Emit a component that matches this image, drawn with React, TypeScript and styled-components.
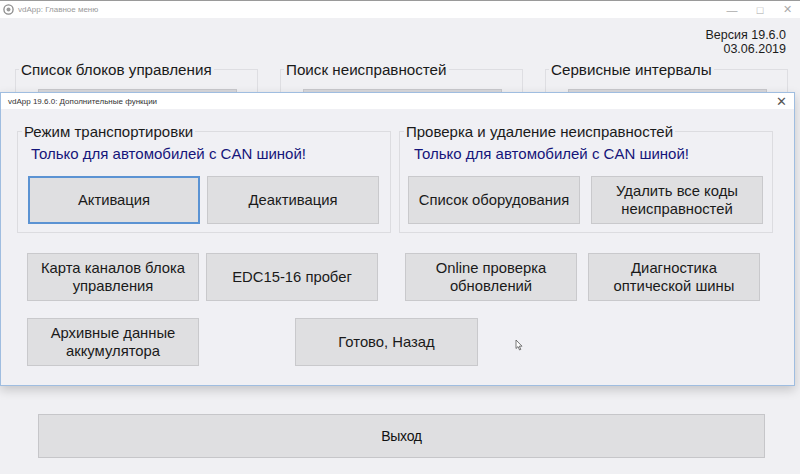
import React from "react";
import styled, { createGlobalStyle } from "styled-components";

const GlobalStyle = createGlobalStyle`
    html, body {
        margin: 0;
        padding: 0;
        width: 800px;
        height: 474px;
        overflow: hidden;
        background: #f0f0f3;
    }
    * {
        box-sizing: border-box;
    }
`;

const FONT = `"Liberation Sans", Arial, sans-serif`;

const MainWindow = styled.div`
    position: relative;
    width: 800px;
    height: 474px;
    display: flex;
    flex-direction: column;
    background: #f0f0f3;
    border-top: 1px solid #9a9a9a;
    font-family: ${FONT};
    color: #1a1a1a;
`;

const TitleBar = styled.div<{ $height: number }>`
    height: ${({ $height }) => $height}px;
    flex-shrink: 0;
    display: flex;
    align-items: center;
    background: #ffffff;
    padding-left: 3px;
`;

const TitleText = styled.span<{ $color: string }>`
    font-size: 8px;
    color: ${({ $color }) => $color};
    margin-left: 4px;
    white-space: nowrap;
`;

const WindowControls = styled.div`
    margin-left: auto;
    display: flex;
    align-items: center;
    height: 100%;
`;

const ControlGlyph = styled.span<{ $width: number }>`
    width: ${({ $width }) => $width}px;
    display: flex;
    justify-content: center;
    align-items: center;
    color: #a9a9a9;
    font-size: 11px;
`;

const VersionBlock = styled.div`
    align-self: flex-end;
    margin: 10px 14px 0 0;
    text-align: right;
    font-size: 12.5px;
    line-height: 14px;
    color: #1c1c1c;
`;

const GroupRow = styled.div`
    display: flex;
    padding-left: 15px;
    gap: 22px;
    margin-top: 5px;
`;

const MainGroup = styled.fieldset<{ $width: number }>`
    width: ${({ $width }) => $width}px;
    height: 40px;
    margin: 0;
    padding: 0;
    border: 1px solid #dedee2;
    border-bottom: none;

    legend {
        margin-left: 3px;
        padding: 0 2px;
        font-size: 15.2px;
        line-height: 17px;
        color: #1a1a1a;
        white-space: nowrap;
    }
`;

const HiddenButtonEdge = styled.div`
    margin: 11px 20px 0 22px;
    height: 4px;
    background: #d8d8dc;
    border: 1px solid #c8c8cc;
`;

const ExitButton = styled.button`
    margin: auto 35px 16px 38px;
    height: 44px;
    background: #dfdfe1;
    border: 1px solid #c6c6c9;
    font-family: ${FONT};
    font-size: 14px;
    color: #111;
    letter-spacing: -0.3px;
`;

const Dialog = styled.div`
    position: absolute;
    left: 0;
    top: 91px;
    width: 795px;
    height: 294px;
    display: flex;
    flex-direction: column;
    background: #f0f0f4;
    border: 1px solid #9fbde0;
    box-shadow: 0 4px 10px rgba(0, 0, 0, 0.18);
`;

const DialogClose = styled.span`
    margin-left: auto;
    width: 26px;
    text-align: center;
    color: #555;
    font-size: 13px;
`;

const DialogBody = styled.div`
    flex: 1;
    padding: 14px 0 0 16px;
    display: flex;
    flex-direction: column;
`;

const TopRow = styled.div`
    display: flex;
    gap: 8px;
`;

const Group = styled.fieldset`
    width: 372px;
    height: 110px;
    margin: 0;
    padding: 0;
    border: 1px solid #dcdce0;

    legend {
        margin-left: 4px;
        padding: 0 2px;
        font-size: 15px;
        line-height: 17px;
        color: #1a1a1a;
        white-space: nowrap;
    }
`;

const Notice = styled.div<{ $pad: number }>`
    padding-left: ${({ $pad }) => $pad}px;
    margin-top: 5px;
    font-size: 15px;
    line-height: 17px;
    color: #15157a;
    white-space: nowrap;
`;

const ButtonPair = styled.div<{ $pad: number; $gap: number; $top?: number }>`
    width: 372px;
    display: flex;
    gap: ${({ $gap }) => $gap}px;
    padding-left: ${({ $pad }) => $pad}px;
    margin-top: ${({ $top }) => $top ?? 0}px;
`;

const ButtonRow = styled.div<{ $top: number }>`
    display: flex;
    gap: 8px;
    margin-top: ${({ $top }) => $top}px;
`;

const Button = styled.button<{ $focused?: boolean; $width?: number; $shift?: number }>`
    width: ${({ $width }) => $width ?? 172}px;
    height: 48px;
    margin: 0 0 0 ${({ $shift }) => $shift ?? 0}px;
    padding: 0 4px;
    background: #dfdfe1;
    border: ${({ $focused }) => ($focused ? "2px solid #5b93d3" : "1px solid #c9c9cc")};
    font-family: ${FONT};
    font-size: 14.8px;
    line-height: 18px;
    color: #1a1a1a;
    text-align: center;
`;

const BottomRow = styled.div`
    display: flex;
    margin-top: 17px;
    padding-left: 10px;
`;

const Cursor = styled.svg`
    position: absolute;
    left: 515px;
    top: 338px;
`;

function AppIcon() {
    return (
        <svg width="11" height="11" viewBox="0 0 11 11">
            <circle cx="5.5" cy="5.5" r="4.6" fill="none" stroke="#8a8a8a" strokeWidth="1.3" />
            <circle cx="5.5" cy="5.5" r="2" fill="#9a9a9a" />
        </svg>
    );
}

export default function App() {
    return (
        <>
            <GlobalStyle />
            <MainWindow>
                <TitleBar $height={17}>
                    <AppIcon />
                    <TitleText $color="#9a9a9a">vdApp: Главное меню</TitleText>
                    <WindowControls>
                        <ControlGlyph $width={28}>—</ControlGlyph>
                        <ControlGlyph $width={28}>□</ControlGlyph>
                        <ControlGlyph $width={26}>✕</ControlGlyph>
                    </WindowControls>
                </TitleBar>
                <VersionBlock>
                    Версия 19.6.0
                    <br />
                    03.06.2019
                </VersionBlock>
                <GroupRow>
                    <MainGroup $width={243}>
                        <legend>Список блоков управления</legend>
                        <HiddenButtonEdge />
                    </MainGroup>
                    <MainGroup $width={243}>
                        <legend>Поиск неисправностей</legend>
                        <HiddenButtonEdge />
                    </MainGroup>
                    <MainGroup $width={243}>
                        <legend>Сервисные интервалы</legend>
                        <HiddenButtonEdge />
                    </MainGroup>
                </GroupRow>
                <ExitButton>Выход</ExitButton>

                <Dialog>
                    <TitleBar $height={16}>
                        <TitleText $color="#333">vdApp 19.6.0: Дополнительные функции</TitleText>
                        <DialogClose>✕</DialogClose>
                    </TitleBar>
                    <DialogBody>
                        <TopRow>
                            <Group>
                                <legend>Режим транспортировки</legend>
                                <Notice $pad={13}>Только для автомобилей с CAN шиной!</Notice>
                                <ButtonPair $pad={10} $gap={7} $top={14}>
                                    <Button $focused>Активация</Button>
                                    <Button>Деактивация</Button>
                                </ButtonPair>
                            </Group>
                            <Group>
                                <legend>Проверка и удаление неисправностей</legend>
                                <Notice $pad={14}>Только для автомобилей с CAN шиной!</Notice>
                                <ButtonPair $pad={8} $gap={11} $top={14}>
                                    <Button>Список оборудования</Button>
                                    <Button>
                                        Удалить все коды
                                        <br />
                                        неисправностей
                                    </Button>
                                </ButtonPair>
                            </Group>
                        </TopRow>
                        <ButtonRow $top={20}>
                            <ButtonPair $pad={10} $gap={7}>
                                <Button>
                                    Карта каналов блока
                                    <br />
                                    управления
                                </Button>
                                <Button>EDC15-16 пробег</Button>
                            </ButtonPair>
                            <ButtonPair $pad={8} $gap={11}>
                                <Button>
                                    Online проверка
                                    <br />
                                    обновлений
                                </Button>
                                <Button>
                                    Диагностика
                                    <br />
                                    оптической шины
                                </Button>
                            </ButtonPair>
                        </ButtonRow>
                        <BottomRow>
                            <Button>
                                Архивные данные
                                <br />
                                аккумулятора
                            </Button>
                            <Button $width={183} $shift={96}>
                                Готово, Назад
                            </Button>
                        </BottomRow>
                    </DialogBody>
                </Dialog>

                <Cursor width="8" height="12" viewBox="0 0 8 12">
                    <path d="M1 1 L1 9.5 L3 7.6 L4.6 11 L5.8 10.4 L4.3 7.2 L7 7.2 Z" fill="#fff" stroke="#555" strokeWidth="0.8" />
                </Cursor>
            </MainWindow>
        </>
    );
}
